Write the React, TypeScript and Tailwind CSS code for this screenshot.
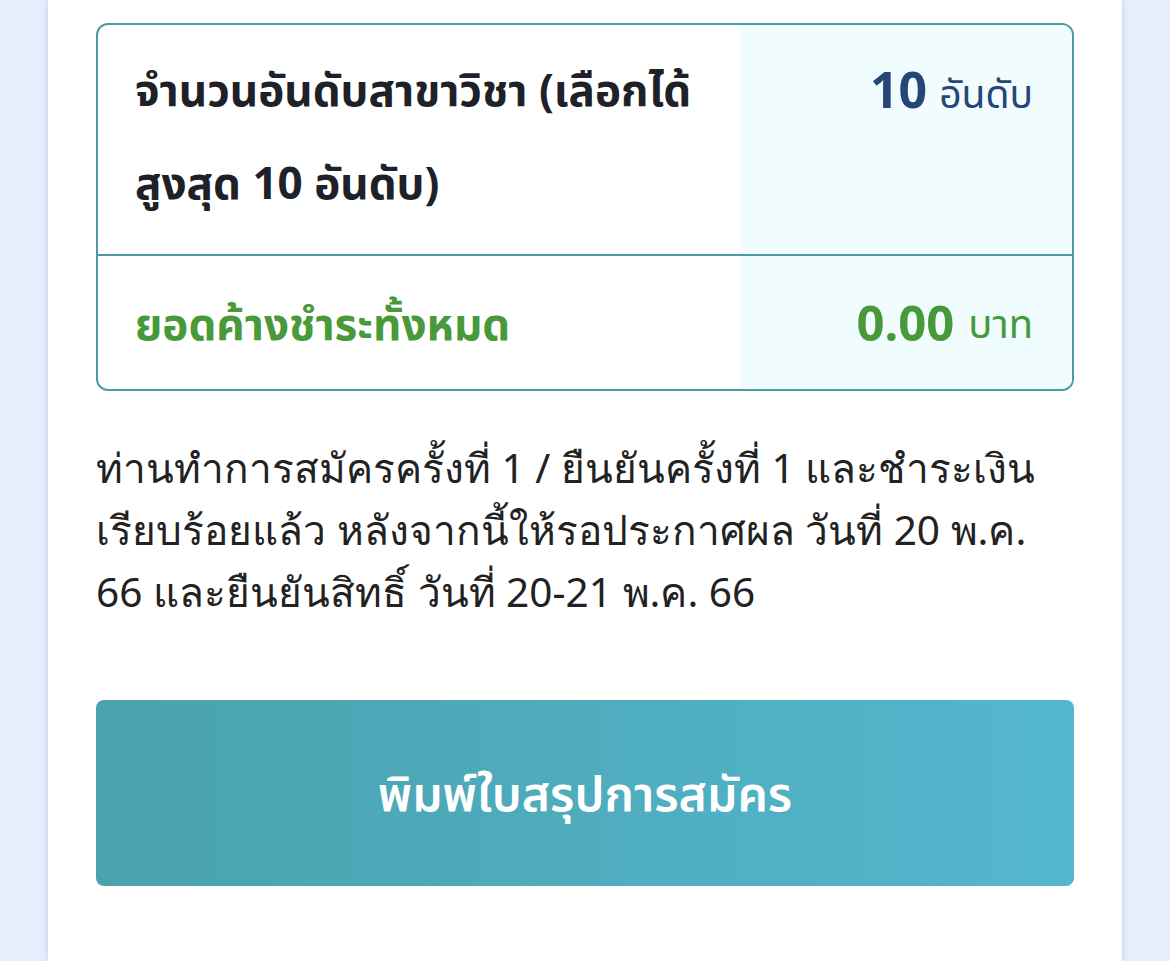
const THAI = '"Noto Sans", "Noto Sans Thai", sans-serif'
// looped Thai for body copy: no Thai family named, so the system's looped fallback is used
const THAI_LOOPED = '"Noto Sans", sans-serif'

export default function App() {
  return (
    <div className="min-h-screen bg-[#e4eefc] flex justify-center" style={{ fontFamily: THAI }}>
      <div className="w-[1074px] min-h-[961px] bg-white shadow-[0_0_6px_rgba(120,150,200,0.35)] px-[48px] pt-[23px]">
        {/* summary table */}
        <div className="rounded-[12px] border-2 border-[#4d9aa5] overflow-hidden">
          <div className="grid grid-cols-[642px_1fr] border-b-2 border-[#4d9aa5]">
            <div className="pl-[37px] pr-4 pt-[18px] pb-[25px] text-[44px] leading-[93px] font-bold text-[#1e2228]">
              จำนวนอันดับสาขาวิชา (เลือกได้
              <br />
              สูงสุด 10 อันดับ)
            </div>
            <div className="bg-[#f0fcfe] pr-[39px] pt-[18px] text-right leading-[93px] text-[#26467a]">
              <span className="text-[50px] font-bold mr-[12px]">10</span>
              <span className="text-[39px]">อันดับ</span>
            </div>
          </div>
          <div className="grid grid-cols-[642px_1fr] h-[133px]">
            <div className="pl-[37px] flex items-center text-[44px] font-bold text-[#48993a]">
              ยอดค้างชำระทั้งหมด
            </div>
            <div className="bg-[#f0fcfe] pr-[39px] flex items-center justify-end gap-[14px] text-[#48993a]">
              <span className="text-[49px] font-bold">0.00</span>
              <span className="text-[40px]">บาท</span>
            </div>
          </div>
        </div>

        <p className="mt-[46px] text-[40.6px] leading-[62px] text-[#222]" style={{ fontFamily: THAI_LOOPED }}>
          ท่านทำการสมัครครั้งที่ 1 / ยืนยันครั้งที่ 1 และชำระเงิน
          <br />
          เรียบร้อยแล้ว หลังจากนี้ให้รอประกาศผล วันที่ 20 พ.ค.
          <br />
          66 และยืนยันสิทธิ์ วันที่ 20-21 พ.ค. 66
        </p>

        <button className="mt-[77px] w-full h-[186px] rounded-[8px] bg-gradient-to-r from-[#4aa2ad] to-[#53b7cf] text-white text-[48px] font-semibold">
          พิมพ์ใบสรุปการสมัคร
        </button>
      </div>
    </div>
  )
}
